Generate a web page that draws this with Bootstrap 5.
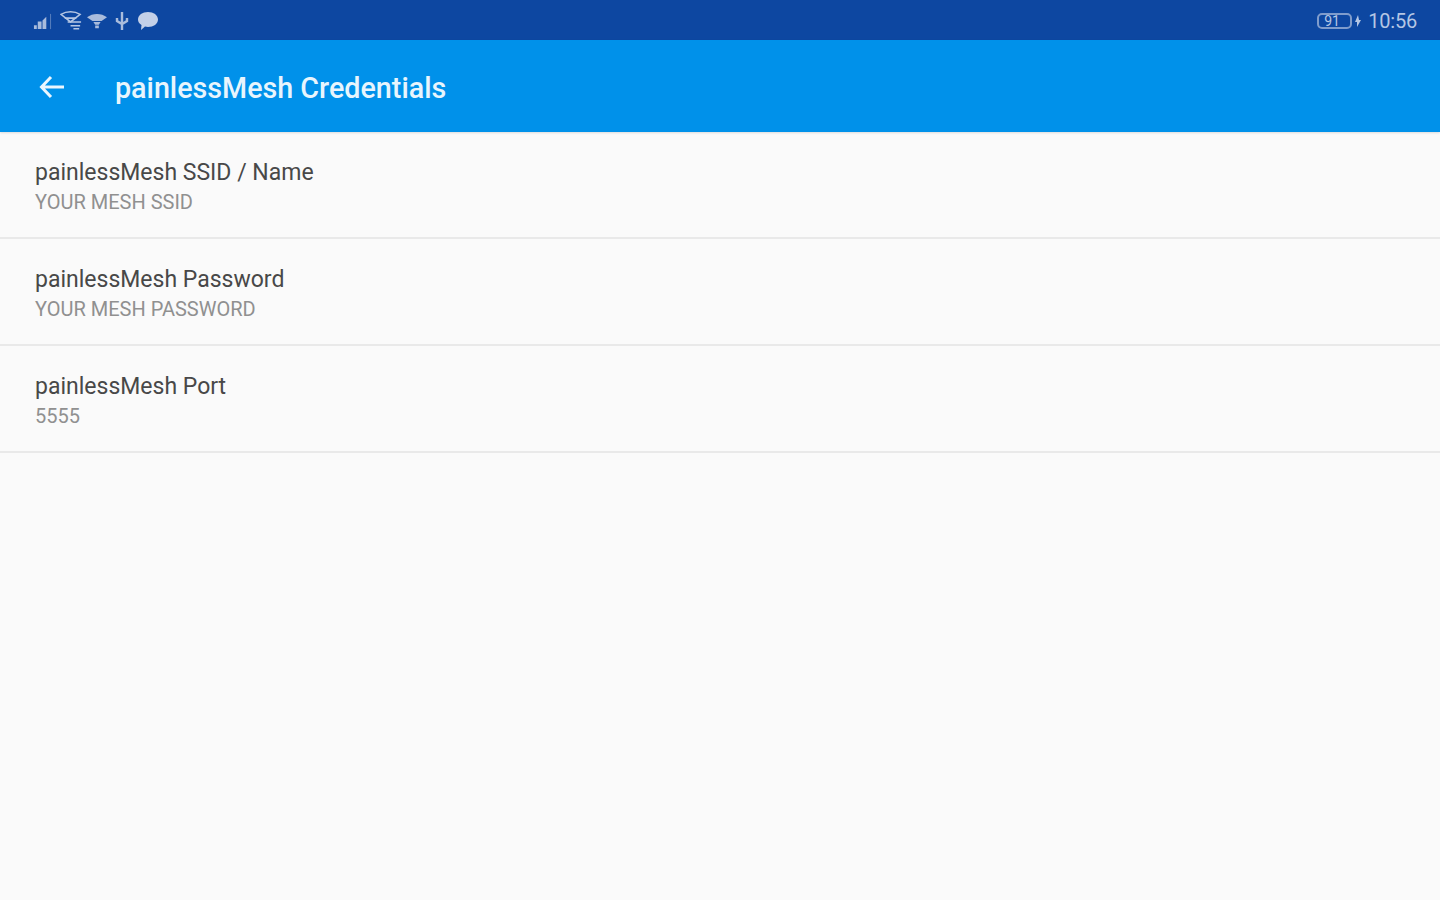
<!DOCTYPE html>
<html lang="en">
<head>
    <meta charset="UTF-8">
    <title>painlessMesh Credentials</title>
    <link href="https://cdn.jsdelivr.net/npm/bootstrap@5.3.3/dist/css/bootstrap.min.css" rel="stylesheet">
    <style>
        html, body { height: 100%; }
        body { background: #fafafa; font-family: Roboto, "Liberation Sans", sans-serif; overflow: hidden; }
        .status-strip { height: 40px; background: #0d47a1; color: #b4c6e4; padding: 2px 23px 0 33px; }
        .status-time { font-size: 20px; line-height: 1; letter-spacing: -0.2px; margin-left: 4px; }
        .status-pct { font-size: 14px; line-height: 1; }
        .batt-box { width: 35px; height: 16px; border: 2px solid #7f9ccc; border-radius: 5px; padding-left: 5px; color: #b4c6e4; }
        .status-right { gap: 2px; }
        .app-strip { height: 92px; background: #0091ea; color: #fff; padding-left: 39px; box-shadow: 0 1px 2px rgba(0,0,0,.12); }
        .back-arrow { margin-top: 2px; }
        .app-title { font-size: 28.7px; font-weight: 500; margin: 4px 0 0 50px; line-height: 1; color: #e8f5fd; }
        .pref-row { height: 107px; padding: 28px 0 0 35px; border-bottom: 2px solid #e9e9e9; }
        .pref-title { font-size: 23px; line-height: 26px; color: #484848; }
        .pref-sub { font-size: 20px; line-height: 24px; margin-top: 4px; color: #909090; }
    </style>
</head>
<body>

    <!-- Status bar -->
    <div class="status-strip d-flex align-items-center justify-content-between">
        <div class="d-flex align-items-center">
            <svg class="me-2" width="19" height="19" viewBox="0 0 20 20" fill="#a9bcdc"><path d="M1 18h3v-4H1zM5 18h4v-8H5zM10 18h4V5l-4 4z"/><rect x="18" y="2" width="1" height="16" opacity=".5"/></svg>
            <svg class="me-1" width="23" height="20" viewBox="0 0 24 20" fill="none" stroke="#b4c6e4" stroke-width="1.6"><path d="M1 3C7-.5 15-.5 21 3l-10 8z"/><path d="M5 7h12M8 11h14M11 15h10M14 18h6"/></svg>
            <svg class="me-2" width="20" height="20" viewBox="0 0 22 20" fill="#a9bcdc"><path d="M0 6C6 1 16 1 22 6l-6 4H6z"/><path d="M7 11h8l-2 3h-4zM9 15h4v3H9z"/></svg>
            <svg class="me-2" width="14" height="20" viewBox="0 0 14 20" fill="none" stroke="#a9bcdc" stroke-width="2.4"><path d="M7 1v18M2 7v3l5 3 5-3V7"/></svg>
            <svg width="22" height="20" viewBox="0 0 22 20" fill="#c3d0e8"><path d="M11 1c5.500 0 10 3 10 7.500S16.500 16 11 16c-1 0-2-.1-3-.4L4 19l.5-5C2 12.600 1 10.700 1 8.500 1 4 5.500 1 11 1z"/></svg>
        </div>
        <div class="status-right d-flex align-items-center">
            <div class="batt-box status-pct d-flex align-items-center">91</div>
            <svg width="8" height="14" viewBox="0 0 8 14" fill="#b4c6e4"><path d="M4 1 1 8h2v5l4-7H5z"/></svg>
            <span class="status-time">10:56</span>
        </div>
    </div>

    <!-- App bar -->
    <div class="app-strip d-flex align-items-center">
        <svg class="back-arrow" width="26" height="26" viewBox="0 0 26 26" fill="none" stroke="#eaf6fe" stroke-width="3"><path d="M25 13H3M12 3 2.500 13 12 23"/></svg>
        <h1 class="app-title">painlessMesh Credentials</h1>
    </div>

    <!-- Preference rows -->
    <div id="prefList"></div>

    <script>
        const prefs = [
            { title: "painlessMesh SSID / Name", value: "YOUR MESH SSID" },
            { title: "painlessMesh Password", value: "YOUR MESH PASSWORD" },
            { title: "painlessMesh Port", value: "5555" }
        ];

        const list = document.getElementById("prefList");
        prefs.forEach(p => {
            const row = document.createElement("div");
            row.className = "pref-row";
            row.innerHTML = `<div class="pref-title">${p.title}</div><div class="pref-sub">${p.value}</div>`;
            list.appendChild(row);
        });
    </script>

    <script src="https://cdn.jsdelivr.net/npm/bootstrap@5.3.3/dist/js/bootstrap.bundle.min.js"></script>
</body>
</html>
